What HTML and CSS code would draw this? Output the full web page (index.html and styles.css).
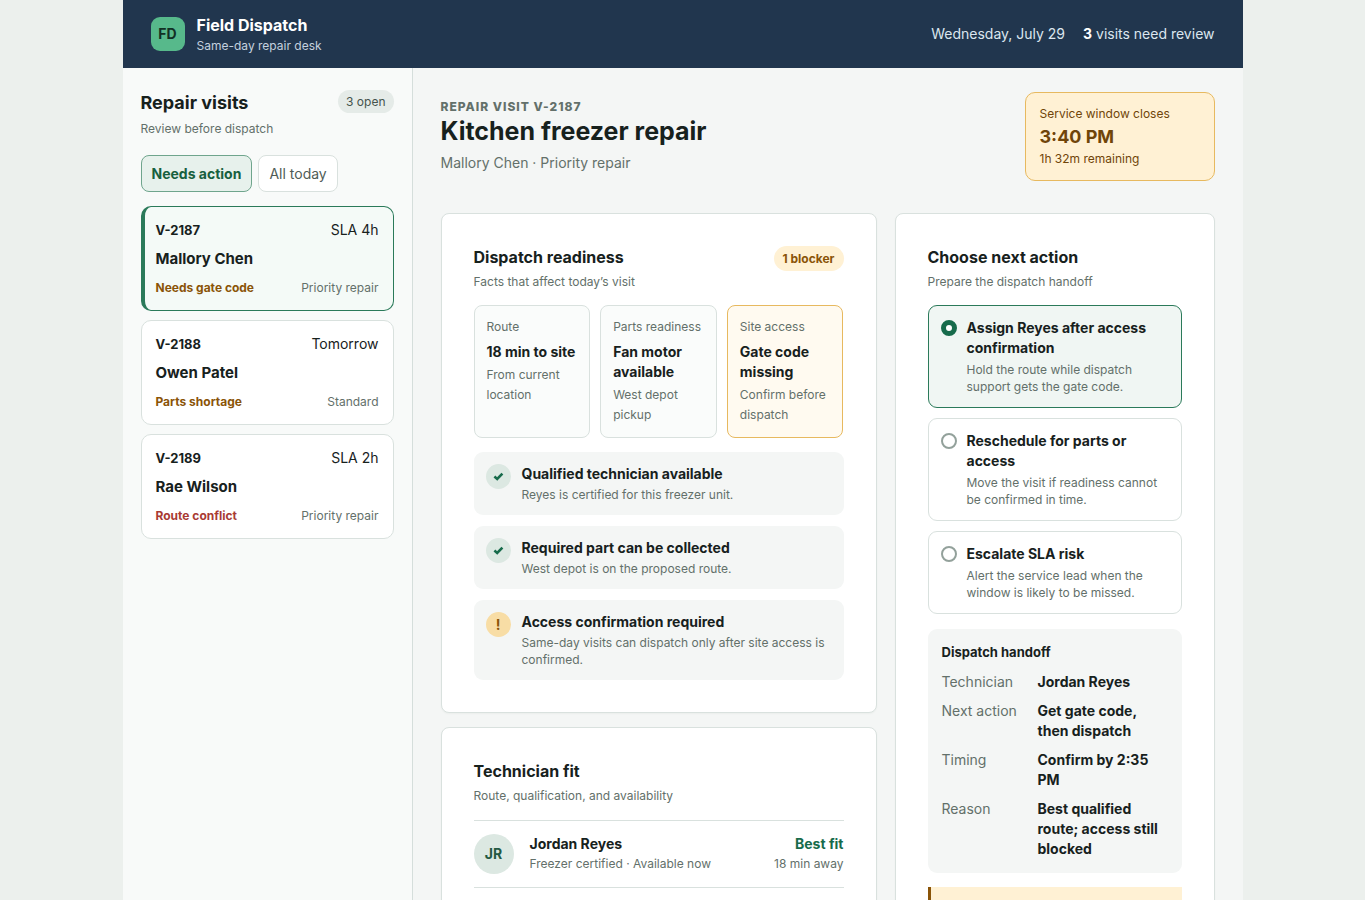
FILE: index.html
```
<!DOCTYPE html>
<html lang="en">

<head>
    <meta charset="UTF-8">
    <meta name="viewport" content="width=device-width, initial-scale=1">
    <title>Field Dispatch</title>
    <link rel="stylesheet" href="styles.css">
</head>

<body>
    <div class="shell">
        <header class="topbar">
            <div class="brand">
                <span class="logo">FD</span>
                <div>
                    <div class="brand-name">Field Dispatch</div>
                    <div class="brand-sub">Same-day repair desk</div>
                </div>
            </div>
            <div class="topbar-info">
                <span>Wednesday, July 29</span>
                <span><b>3</b> visits need review</span>
            </div>
        </header>

        <div class="workspace">
            <aside class="sidebar">
                <div class="sidebar-head">
                    <h2>Repair visits</h2>
                    <span class="pill">3 open</span>
                </div>
                <p class="hint">Review before dispatch</p>
                <div class="filters">
                    <button type="button" class="filter active">Needs action</button>
                    <button type="button" class="filter">All today</button>
                </div>
                <div class="visits">
                    <button type="button" class="visit selected">
                        <span class="row"><b>V-2187</b><span>SLA 4h</span></span>
                        <span class="customer">Mallory Chen</span>
                        <span class="row small"><span class="warn">Needs gate code</span><span>Priority repair</span></span>
                    </button>
                    <button type="button" class="visit">
                        <span class="row"><b>V-2188</b><span>Tomorrow</span></span>
                        <span class="customer">Owen Patel</span>
                        <span class="row small"><span class="warn">Parts shortage</span><span>Standard</span></span>
                    </button>
                    <button type="button" class="visit">
                        <span class="row"><b>V-2189</b><span>SLA 2h</span></span>
                        <span class="customer">Rae Wilson</span>
                        <span class="row small"><span class="danger">Route conflict</span><span>Priority repair</span></span>
                    </button>
                </div>
            </aside>

            <main class="main">
                <div class="page-head">
                    <div>
                        <div class="eyebrow">REPAIR VISIT V-2187</div>
                        <h1>Kitchen freezer repair</h1>
                        <p class="subtitle">Mallory Chen · Priority repair</p>
                    </div>
                    <div class="deadline">
                        <span>Service window closes</span>
                        <strong>3:40 PM</strong>
                        <span>1h 32m remaining</span>
                    </div>
                </div>

                <div class="columns">
                    <div class="stack">
                        <section class="panel">
                            <div class="panel-head">
                                <div>
                                    <h3>Dispatch readiness</h3>
                                    <p class="hint">Facts that affect today’s visit</p>
                                </div>
                                <span class="pill pill-warn">1 blocker</span>
                            </div>
                            <div class="facts">
                                <div class="fact">
                                    <span class="label">Route</span>
                                    <strong>18 min to site</strong>
                                    <p>From current location</p>
                                </div>
                                <div class="fact">
                                    <span class="label">Parts readiness</span>
                                    <strong>Fan motor available</strong>
                                    <p>West depot pickup</p>
                                </div>
                                <div class="fact fact-warn">
                                    <span class="label">Site access</span>
                                    <strong>Gate code missing</strong>
                                    <p>Confirm before dispatch</p>
                                </div>
                            </div>
                            <ul class="checks">
                                <li>
                                    <span class="mark">
                                        <svg width="11" height="9" viewBox="0 0 11 9"><path d="M1.4 4.6 4.2 7 9.4 1.7" fill="none" stroke="currentColor" stroke-width="2.6"/></svg>
                                    </span>
                                    <div>
                                        <strong>Qualified technician available</strong>
                                        <p>Reyes is certified for this freezer unit.</p>
                                    </div>
                                </li>
                                <li>
                                    <span class="mark">
                                        <svg width="11" height="9" viewBox="0 0 11 9"><path d="M1.4 4.6 4.2 7 9.4 1.7" fill="none" stroke="currentColor" stroke-width="2.6"/></svg>
                                    </span>
                                    <div>
                                        <strong>Required part can be collected</strong>
                                        <p>West depot is on the proposed route.</p>
                                    </div>
                                </li>
                                <li>
                                    <span class="mark mark-warn">!</span>
                                    <div>
                                        <strong>Access confirmation required</strong>
                                        <p>Same-day visits can dispatch only after site access is confirmed.</p>
                                    </div>
                                </li>
                            </ul>
                        </section>

                        <section class="panel">
                            <h3>Technician fit</h3>
                            <p class="hint">Route, qualification, and availability</p>
                            <ul class="techs">
                                <li>
                                    <span class="avatar">JR</span>
                                    <div class="tech-info">
                                        <strong>Jordan Reyes</strong>
                                        <span>Freezer certified · Available now</span>
                                    </div>
                                    <div class="tech-fit">
                                        <strong>Best fit</strong>
                                        <span>18 min away</span>
                                    </div>
                                </li>
                            </ul>
                        </section>
                    </div>

                    <section class="panel">
                        <h3>Choose next action</h3>
                        <p class="hint">Prepare the dispatch handoff</p>
                        <div class="options">
                            <label class="option">
                                <input type="radio" name="action" checked>
                                <span>
                                    <strong>Assign Reyes after access confirmation</strong>
                                    <small>Hold the route while dispatch support gets the gate code.</small>
                                </span>
                            </label>
                            <label class="option">
                                <input type="radio" name="action">
                                <span>
                                    <strong>Reschedule for parts or access</strong>
                                    <small>Move the visit if readiness cannot be confirmed in time.</small>
                                </span>
                            </label>
                            <label class="option">
                                <input type="radio" name="action">
                                <span>
                                    <strong>Escalate SLA risk</strong>
                                    <small>Alert the service lead when the window is likely to be missed.</small>
                                </span>
                            </label>
                        </div>
                        <div class="handoff">
                            <h4>Dispatch handoff</h4>
                            <dl>
                                <dt>Technician</dt>
                                <dd>Jordan Reyes</dd>
                                <dt>Next action</dt>
                                <dd>Get gate code, then dispatch</dd>
                                <dt>Timing</dt>
                                <dd>Confirm by 2:35 PM</dd>
                                <dt>Reason</dt>
                                <dd>Best qualified route; access still blocked</dd>
                            </dl>
                        </div>
                        <div class="notice"></div>
                    </section>
                </div>
            </main>
        </div>
    </div>
</body>

</html>
```

FILE: styles.css
```
* {
    box-sizing: border-box;
    margin: 0;
    padding: 0;
}

body {
    background: #ecf0ed;
    color: #17211d;
    font: 14px/20px Inter, "Liberation Sans", sans-serif;
}

button {
    font: inherit;
    color: inherit;
    cursor: pointer;
}

ul {
    list-style: none;
}

strong,
b {
    font-weight: 700;
}

.shell {
    max-width: 1120px;
    min-height: 100vh;
    margin: 0 auto;
    background: #f4f6f5;
    display: flex;
    flex-direction: column;
}

/* top bar */
.topbar {
    display: flex;
    align-items: center;
    justify-content: space-between;
    height: 68px;
    padding: 0 28px;
    background: #21364e;
    color: #dce6ef;
}

.brand {
    display: flex;
    align-items: center;
    gap: 12px;
}

.logo {
    width: 34px;
    height: 34px;
    border-radius: 9px;
    background: #57b98b;
    color: #123024;
    font-weight: 700;
    line-height: 34px;
    text-align: center;
}

.brand-name {
    color: #fff;
    font-size: 16px;
    font-weight: 700;
    line-height: 23px;
}

.brand-sub {
    color: #c4d1df;
    font-size: 12px;
    line-height: 18px;
}

.topbar-info {
    display: flex;
    gap: 18px;
}

.topbar-info b {
    color: #fff;
}

.workspace {
    flex: 1;
    display: grid;
    grid-template-columns: 290px minmax(0, 1fr);
}

/* visit list */
.sidebar {
    padding: 22px 18px;
    background: #f8faf9;
    border-right: 1px solid #d5dedb;
}

.sidebar-head {
    display: flex;
    align-items: flex-start;
    justify-content: space-between;
}

h2 {
    font-size: 18px;
    line-height: 26px;
}

h3 {
    font-size: 16px;
    line-height: 23px;
}

.hint {
    margin-top: 4px;
    color: #63706a;
    font-size: 12px;
    line-height: 17px;
}

.pill {
    padding: 3px 8px;
    border-radius: 99px;
    background: #e5ebe8;
    color: #46534d;
    font-size: 12px;
    line-height: 17px;
}

.pill-warn {
    padding: 4px 9px;
    background: #fff1d4;
    color: #8a5408;
    font-weight: 700;
}

.filters {
    display: flex;
    gap: 6px;
    margin: 18px 0 14px;
}

.filter {
    padding: 8px 10px;
    border: 1px solid #d9e1de;
    border-radius: 8px;
    background: #fff;
    color: #4f5c56;
    line-height: 19px;
}

.filter.active {
    border-color: #6fa58d;
    background: #e7f1ec;
    color: #17603f;
    font-weight: 700;
}

.visits {
    display: grid;
    gap: 9px;
}

.visit {
    display: block;
    width: 100%;
    padding: 13px 14px;
    border: 1px solid #d9e1de;
    border-radius: 10px;
    background: #fff;
    text-align: left;
}

.visit.selected {
    padding-left: 11px;
    border-color: #2b7a5a;
    border-left-width: 4px;
    background: #f4faf7;
}

.row {
    display: flex;
    justify-content: space-between;
}

.row b {
    font-size: 13px;
}

.customer {
    display: block;
    margin: 8px 0;
    font-size: 15px;
    font-weight: 700;
    line-height: 22px;
}

.small {
    color: #63706a;
    font-size: 12px;
    line-height: 19px;
}

.warn,
.danger {
    color: #8a5408;
    font-weight: 700;
}

.danger {
    color: #a93a33;
}

/* visit detail */
.main {
    padding: 24px 28px;
}

.page-head {
    display: flex;
    align-items: flex-start;
    justify-content: space-between;
    margin-bottom: 32px;
}

.eyebrow {
    margin-top: 6px;
    color: #63706a;
    font-size: 12px;
    font-weight: 800;
    letter-spacing: 1px;
    line-height: 17px;
}

h1 {
    font-size: 25px;
    line-height: 32px;
}

.subtitle {
    margin-top: 6px;
    color: #63706a;
}

.deadline {
    display: flex;
    flex-direction: column;
    min-width: 190px;
    padding: 12px 14px;
    border: 1px solid #e7b95f;
    border-radius: 10px;
    background: #fff1d4;
    color: #704509;
    font-size: 12px;
    line-height: 18px;
}

.deadline strong {
    font-size: 18px;
    line-height: 27px;
}

.columns {
    display: grid;
    grid-template-columns: minmax(0, 1fr) 320px;
    gap: 18px;
}

.stack {
    display: flex;
    flex-direction: column;
    gap: 14px;
}

.panel {
    padding: 32px;
    border: 1px solid #d9e1de;
    border-radius: 8px;
    background: #fff;
    box-shadow: 0 1px 2px rgba(20, 40, 30, 0.04);
}

.panel-head {
    display: flex;
    align-items: flex-start;
    justify-content: space-between;
}

.facts {
    display: grid;
    grid-template-columns: repeat(3, minmax(0, 1fr));
    gap: 10px;
    margin: 15px 0 14px;
}

.fact {
    padding: 12px;
    border: 1px solid #d9e1de;
    border-radius: 8px;
    background: #fafcfb;
}

.fact-warn {
    border-color: #e7b95f;
    background: #fffaf0;
}

.fact .label {
    display: block;
    color: #63706a;
    font-size: 12px;
    line-height: 18px;
}

.fact strong {
    display: block;
    margin: 6px 0 3px;
}

.fact p {
    color: #63706a;
    font-size: 12px;
}

.checks {
    display: grid;
    gap: 11px;
}

.checks li {
    display: flex;
    gap: 11px;
    padding: 12px;
    border-radius: 9px;
    background: #f4f6f5;
}

.checks strong {
    display: block;
}

.checks p {
    margin-top: 2px;
    color: #63706a;
    font-size: 12px;
    line-height: 17px;
}

.mark {
    display: flex;
    flex: none;
    align-items: center;
    justify-content: center;
    width: 25px;
    height: 25px;
    border-radius: 50%;
    background: #dce8e2;
    color: #176b4b;
    font-weight: 700;
}

.mark-warn {
    background: #f8dda5;
    color: #8a5408;
}

/* technicians */
.techs {
    margin-top: 16px;
}

.techs li {
    display: flex;
    align-items: center;
    gap: 16px;
    padding: 13px 0;
    border-top: 1px solid #d9e1de;
}

.techs li:last-child {
    border-bottom: 1px solid #d9e1de;
}

.avatar {
    width: 40px;
    height: 40px;
    border-radius: 50%;
    background: #dce8e2;
    color: #245943;
    font-weight: 700;
    line-height: 40px;
    text-align: center;
}

.tech-info {
    flex: 1;
}

.tech-fit {
    text-align: right;
}

.tech-info strong,
.tech-fit strong {
    display: block;
}

.tech-info span,
.tech-fit span {
    display: block;
    color: #63706a;
    font-size: 12px;
}

.tech-fit strong {
    color: #176b4b;
}

/* next action */
.options {
    display: grid;
    gap: 10px;
    margin-top: 15px;
}

.option {
    display: flex;
    align-items: flex-start;
    gap: 10px;
    padding: 12px;
    border: 1px solid #d9e1de;
    border-radius: 9px;
    cursor: pointer;
}

.option:has(input:checked) {
    border-color: #2b7a5a;
    background: #f0f6f3;
}

.option input {
    flex: none;
    appearance: none;
    width: 16px;
    height: 16px;
    margin-top: 2px;
    border: 2px solid #93a19b;
    border-radius: 50%;
    background: #fff;
}

.option input:checked {
    border: 5px solid #176b4b;
}

.option strong,
.option small {
    display: block;
}

.option small {
    margin-top: 3px;
    color: #63706a;
    font-size: 12px;
    line-height: 17px;
}

.handoff {
    margin: 15px 0 14px;
    padding: 14px;
    border-radius: 9px;
    background: #f4f6f5;
}

.handoff h4 {
    font-size: 13px;
    line-height: 19px;
}

.handoff dl {
    display: grid;
    grid-template-columns: 84px minmax(0, 1fr);
    gap: 9px 12px;
    margin-top: 10px;
}

.handoff dt {
    color: #63706a;
}

.handoff dd {
    font-weight: 700;
}

.notice {
    min-height: 42px;
    border-left: 3px solid #8a5408;
    background: #fff1d4;
}
```
